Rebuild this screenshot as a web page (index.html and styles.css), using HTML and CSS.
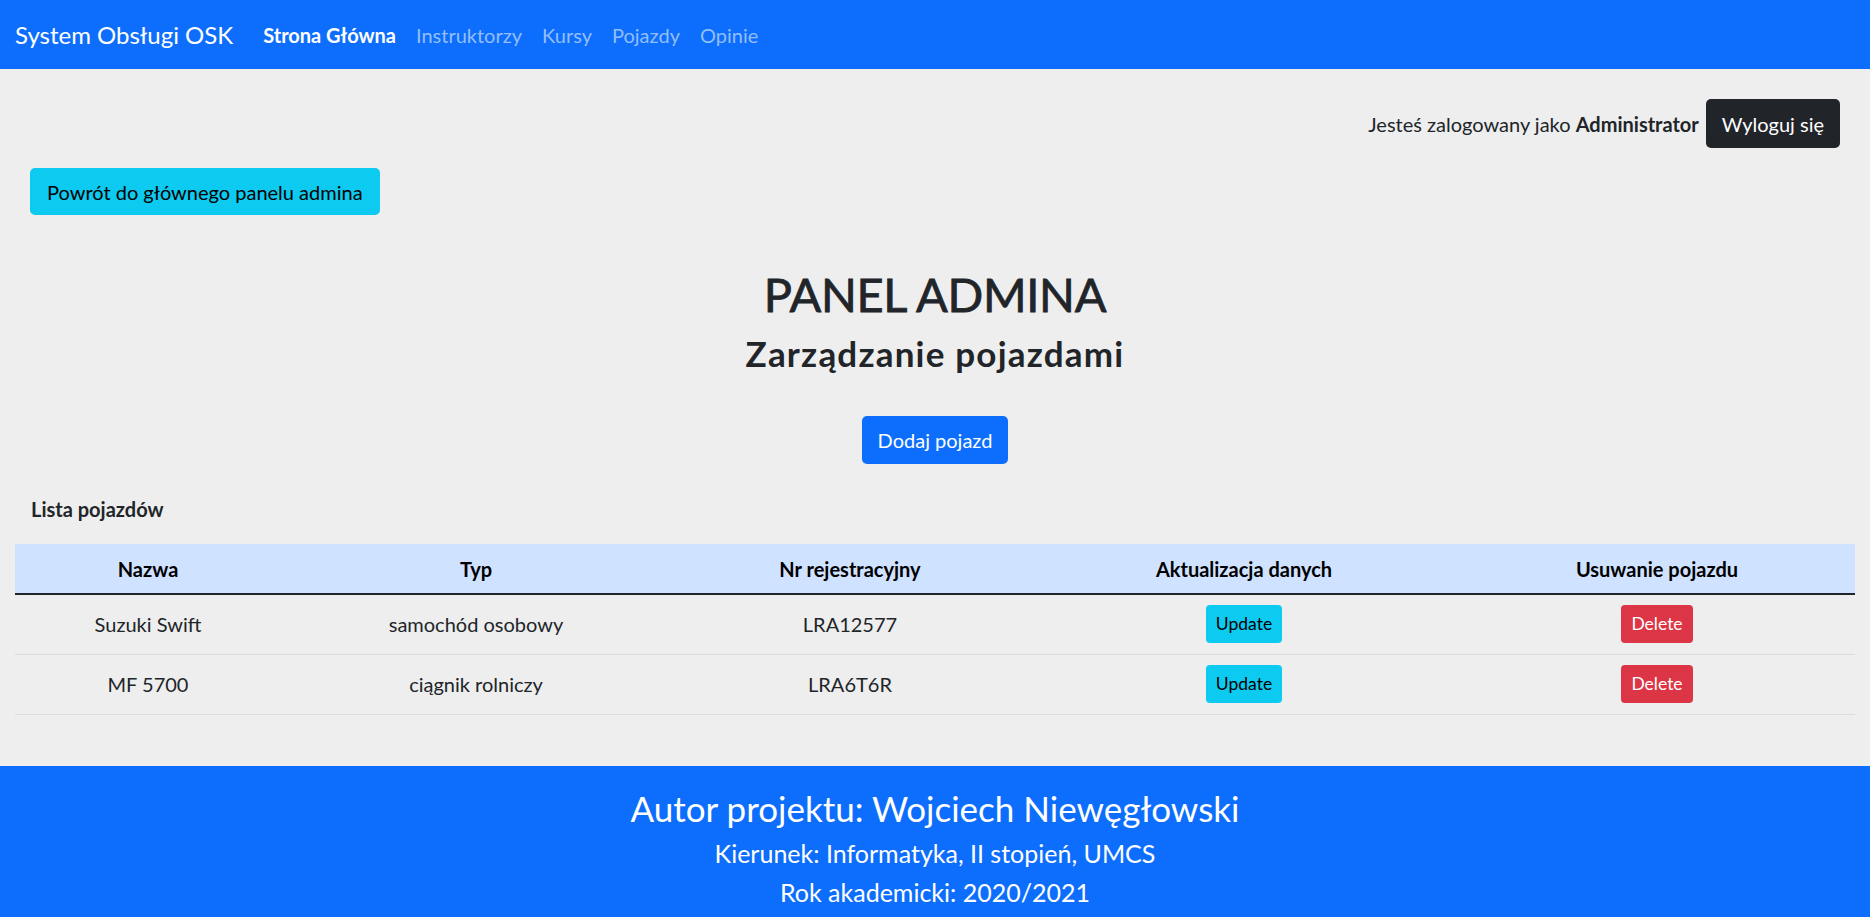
FILE: index.html
```html
<!DOCTYPE html>
<html lang="pl">
<head>
<meta charset="utf-8">
<title>System Obsługi OSK</title>
<link rel="stylesheet" href="styles.css">
</head>
<body>
<nav class="navbar">
  <a class="brand" href="#">System Obsługi OSK</a>
  <a class="nav-link active" href="#">Strona Główna</a>
  <a class="nav-link" href="#">Instruktorzy</a>
  <a class="nav-link" href="#">Kursy</a>
  <a class="nav-link" href="#">Pojazdy</a>
  <a class="nav-link" href="#">Opinie</a>
</nav>
<main class="main">
  <div class="login-row">
    <span class="login-text">Jesteś zalogowany jako <b>Administrator</b></span>
    <a class="btn btn-dark" href="#">Wyloguj się</a>
  </div>
  <div class="back-row">
    <a class="btn btn-info btn-back" href="#">Powrót do głównego panelu admina</a>
  </div>
  <h1 class="title">PANEL ADMINA</h1>
  <h3 class="subtitle">Zarządzanie pojazdami</h3>
  <div class="add-row">
    <a class="btn btn-primary" href="#">Dodaj pojazd</a>
  </div>
  <div class="list-label">Lista pojazdów</div>
  <table class="table">
    <colgroup>
      <col class="c1"><col class="c2"><col class="c3"><col class="c4"><col class="c5">
    </colgroup>
    <thead>
      <tr>
        <th>Nazwa</th>
        <th>Typ</th>
        <th>Nr rejestracyjny</th>
        <th>Aktualizacja danych</th>
        <th>Usuwanie pojazdu</th>
      </tr>
    </thead>
    <tbody>
      <tr>
        <td>Suzuki Swift</td>
        <td>samochód osobowy</td>
        <td>LRA12577</td>
        <td><a class="btn-sm btn-info" href="#">Update</a></td>
        <td><a class="btn-sm btn-danger" href="#">Delete</a></td>
      </tr>
      <tr>
        <td>MF 5700</td>
        <td>ciągnik rolniczy</td>
        <td>LRA6T6R</td>
        <td><a class="btn-sm btn-info" href="#">Update</a></td>
        <td><a class="btn-sm btn-danger" href="#">Delete</a></td>
      </tr>
    </tbody>
  </table>
</main>
<footer class="footer">
  <h3 class="f-title">Autor projektu: Wojciech Niewęgłowski</h3>
  <h5 class="f-line">Kierunek: Informatyka, II stopień, UMCS</h5>
  <h5 class="f-line">Rok akademicki: 2020/2021</h5>
</footer>
</body>
</html>
```
FILE: styles.css
```css
* { box-sizing: border-box; }
html, body { margin: 0; padding: 0; }
body {
  background: #eeeeee;
  color: #212529;
  font-family: "Lato", "Open Sans", sans-serif;
  font-size: 20px;
  line-height: 1.5;
}
a { text-decoration: none; }

.navbar {
  height: 69px;
  background: #0d6efd;
  display: flex;
  align-items: center;
  padding: 0 15px;
}
.brand {
  color: #fff;
  font-size: 24px;
  margin-right: 20px;
}
.nav-link {
  color: #92befe;
  font-size: 20px;
  padding: 0 10px;
}
.nav-link.active { color: #fff; font-weight: 700; }

.main { padding: 0 15px; }

.btn {
  display: inline-flex;
  align-items: center;
  justify-content: center;
  border-radius: 5px;
  font-size: 20px;
  padding: 0 16px;
  height: 49px;
}
.btn-dark { background: #212529; color: #fff; }
.btn-info { background: #0dcaf0; color: #000; }
.btn-primary { background: #0d6efd; color: #fff; }
.btn-danger { background: #dc3545; color: #fff; }

.login-row {
  display: flex;
  justify-content: flex-end;
  align-items: center;
  gap: 7px;
  margin-top: 30px;
  padding-right: 15px;
}
.back-row { margin-top: 20px; padding-left: 15px; }
.btn-back { height: 47px; padding: 0 17px; }

.title {
  margin: 49px 0 0;
  text-align: center;
  font-size: 47px;
  line-height: 60px;
  font-weight: 400;
  letter-spacing: -0.3px;
  -webkit-text-stroke: 0.8px #212529;
}
.subtitle {
  margin: 8px 0 0;
  text-align: center;
  font-size: 35px;
  line-height: 42px;
  font-weight: 700;
  letter-spacing: 1.2px;
}
.add-row {
  display: flex;
  justify-content: center;
  margin-top: 42px;
}
.add-row .btn { height: 48px; padding: 0 16px; }

.list-label {
  margin: 30px 0 0 16px;
  font-weight: 700;
  line-height: 30px;
}

.table {
  width: 100%;
  margin-top: 20px;
  border-collapse: collapse;
  table-layout: fixed;
}
.c1 { width: 266px; }
.c2 { width: 390px; }
.c3 { width: 358px; }
.c4 { width: 430px; }
.c5 { width: 396px; }
.table th {
  background: #cfe2ff;
  color: #000;
  font-weight: 700;
  height: 50px;
  padding: 0 10px;
  border-bottom: 2px solid #212529;
  text-align: center;
  vertical-align: middle;
}
.table td {
  height: 60px;
  padding: 0 10px;
  border-bottom: 1px solid #dcdcdc;
  text-align: center;
  vertical-align: middle;
}
.btn-sm {
  display: inline-flex;
  align-items: center;
  justify-content: center;
  height: 38px;
  padding: 0 10px;
  border-radius: 4px;
  font-size: 17.5px;
}

.footer {
  margin-top: 51px;
  background: #0d6efd;
  color: #fff;
  text-align: center;
  padding: 21px 0 20px;
}
.f-title {
  margin: 0 0 9px;
  font-size: 35px;
  line-height: 42px;
  font-weight: 400;
}
.f-line {
  margin: 0 0 9px;
  font-size: 25px;
  line-height: 30px;
  font-weight: 400;
}
```
